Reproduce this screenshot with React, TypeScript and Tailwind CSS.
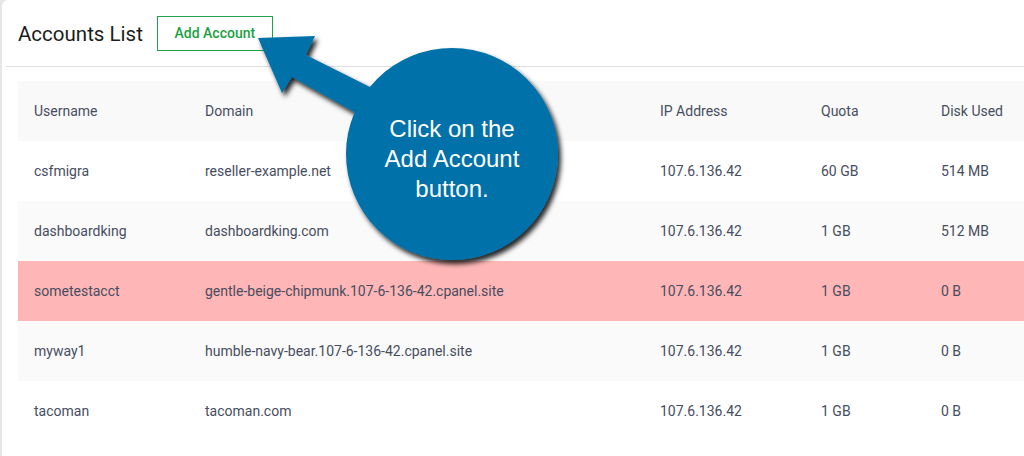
import React from "react";

type Account = {
  user: string;
  domain: string;
  ip: string;
  quota: string;
  disk: string;
  flagged?: boolean;
};

const accounts: Account[] = [
  { user: "csfmigra", domain: "reseller-example.net", ip: "107.6.136.42", quota: "60 GB", disk: "514 MB" },
  { user: "dashboardking", domain: "dashboardking.com", ip: "107.6.136.42", quota: "1 GB", disk: "512 MB" },
  {
    user: "sometestacct",
    domain: "gentle-beige-chipmunk.107-6-136-42.cpanel.site",
    ip: "107.6.136.42",
    quota: "1 GB",
    disk: "0 B",
    flagged: true,
  },
  { user: "myway1", domain: "humble-navy-bear.107-6-136-42.cpanel.site", ip: "107.6.136.42", quota: "1 GB", disk: "0 B" },
  { user: "tacoman", domain: "tacoman.com", ip: "107.6.136.42", quota: "1 GB", disk: "0 B" },
];

const cols = "grid grid-cols-[171px_455px_161px_120px_1fr] items-center h-[60px]";

const Callout = () => (
  <div className="absolute inset-0 pointer-events-none">
    <svg width="1024" height="456" viewBox="0 0 1024 456" className="absolute left-0 top-0">
      <defs>
        <filter id="shadow" x="-20%" y="-20%" width="140%" height="140%">
          <feDropShadow dx="3" dy="4" stdDeviation="2.5" floodColor="#000" floodOpacity="0.85" />
        </filter>
      </defs>
      <g filter="url(#shadow)" fill="#0071a9">
        <polygon points="258,38 315,36 306,55 400,102 390,132 292,77 282,93" />
        <circle cx="452" cy="154" r="106" />
      </g>
    </svg>
    <div
      className="absolute left-[352px] top-[114px] w-[200px] text-center text-white text-[24px] leading-[30px]"
      style={{ fontFamily: '"Liberation Sans", Arial, sans-serif' }}
    >
      Click on the
      <br />
      Add Account
      <br />
      button.
    </div>
  </div>
);

export default function App() {
  return (
    <div className="relative w-[1024px] h-[456px] overflow-hidden bg-[#e6e6e6]" style={{ fontFamily: "Roboto, sans-serif" }}>
      <div className="ml-[2px] h-full bg-white rounded-tl-[6px]">
        <div className="flex items-center h-[66px] pl-4">
          <h1 className="text-[20.5px] text-[#1c1c1c] leading-none mt-[2px]">Accounts List</h1>
          <button className="ml-[14px] w-[116px] h-[35px] border border-[#1fa34a] text-[#1d9f42] text-[14px] font-medium">
            Add Account
          </button>
        </div>
        <div className="ml-[4px] h-px bg-[#dedede]" />

        <div className="mt-[14px] ml-4 text-[14px] text-[#474d60]">
          <div className={`${cols} bg-[#f9f9f9]`}>
            <div className="pl-4">Username</div>
            <div className="pl-4">Domain</div>
            <div className="pl-4">IP Address</div>
            <div className="pl-4">Quota</div>
            <div className="pl-4">Disk Used</div>
          </div>
          {accounts.map((a, i) => (
            <div
              key={a.user}
              className={`${cols} ${a.flagged ? "bg-[#ffb6b6]" : i % 2 === 1 ? "bg-[#fafafa]" : "bg-white"}`}
            >
              <div className="pl-4">{a.user}</div>
              <div className="pl-4 whitespace-nowrap">{a.domain}</div>
              <div className="pl-4">{a.ip}</div>
              <div className="pl-4">{a.quota}</div>
              <div className="pl-4">{a.disk}</div>
            </div>
          ))}
        </div>
      </div>
      <Callout />
    </div>
  );
}
